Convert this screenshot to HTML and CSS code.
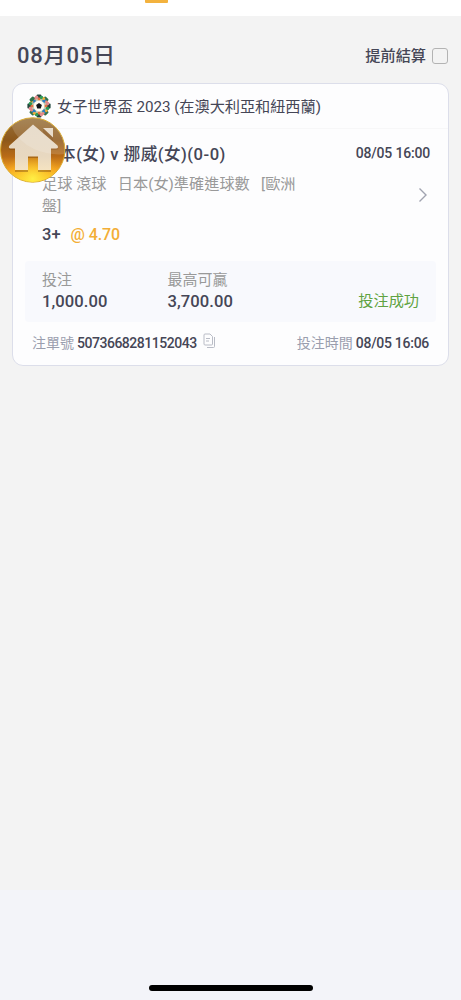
FILE: index.html
```
<!DOCTYPE html>
<html lang="zh-Hant">
<head>
  <meta charset="UTF-8" />
  <meta name="viewport" content="width=device-width, initial-scale=1" />
  <title>投注紀錄</title>
  <link rel="stylesheet" href="styles.css">
</head>
<body>
  <div class="tab-bar"><span class="tab-active"></span></div>

  <main>
    <header class="day-header">
      <h1>08月05日</h1>
      <label class="cashout">提前結算<span class="checkbox"></span></label>
    </header>

    <section class="card">
      <div class="league">
        <svg class="badge" width="24" height="24" viewBox="-12 -12 24 24">
          <circle r="9.8" fill="#c3cbae" />
          <g id="quarter">
            <rect x="-2.4" y="-11.6" width="4.8" height="4" rx="1" fill="#24483f" />
            <circle cx="-2.4" cy="-8.6" r="1.8" fill="#e58b91" />
            <circle cx="2.5" cy="-8.5" r="1.8" fill="#2c9b57" />
            <path d="M0-9 1.500-6.700 0-5-1.500-6.700z" fill="#e8743f" />
          </g>
          <use href="#quarter" transform="rotate(90)" />
          <use href="#quarter" transform="rotate(180)" />
          <use href="#quarter" transform="rotate(270)" />
          <g id="corner">
            <rect x="-2.6" y="-11.4" width="5.2" height="3.4" rx="1" fill="#30714b" transform="rotate(45)" />
            <circle cx="-5.2" cy="-5.2" r="2" fill="#2b7fc1" />
            <circle cx="-7.3" cy="-4.8" r="1.4" fill="#f0ae35" />
            <circle cx="-4.200" cy="-7.4" r="1.4" fill="#e58b80" />
          </g>
          <use href="#corner" transform="rotate(90)" />
          <use href="#corner" transform="rotate(180)" />
          <use href="#corner" transform="rotate(270)" />
          <circle r="5.4" fill="#fffdf4" />
          <path d="M0-3 2.9-.9 1.8 2.4H-1.8L-2.9-.9z" fill="#15191b" />
        </svg>
        <span>女子世界盃 2023 (在澳大利亞和紐西蘭)</span>
      </div>

      <div class="match">
        <div class="match-title">
          <h2>日本(女) v 挪威(女)(0-0)</h2>
          <time>08/05 16:00</time>
        </div>
        <div class="match-body">
          <p class="market">足球 滾球&nbsp;&nbsp; 日本(女)準確進球數&nbsp;&nbsp; [歐洲盤]</p>
          <svg class="arrow" width="10" height="16" viewBox="0 0 10 16">
            <path d="M1.5 1.5 8 8 1.5 14.5" />
          </svg>
        </div>
        <div class="pick">3+<span class="odds">@ 4.70</span></div>
      </div>

      <div class="stake">
        <div class="amount"><span>投注</span><b>1,000.00</b></div>
        <div class="amount"><span>最高可贏</span><b>3,700.00</b></div>
        <div class="status">投注成功</div>
      </div>

      <footer class="ticket">
        <div class="ticket-no">
          <span>注單號</span><b>5073668281152043</b>
          <svg class="copy" width="13" height="16" viewBox="0 0 13 16">
            <path d="M2 1H7L9.5 3.5V11a1 1 0 0 1-1 1H2A1 1 0 0 1 1 11V2A1 1 0 0 1 2 1zM3 5.5H7M3 8H6M11.5 4V13.5a1 1 0 0 1-1 1H4" />
          </svg>
        </div>
        <div class="ticket-time"><span>投注時間</span><b>08/05 16:06</b></div>
      </footer>
    </section>
  </main>

  <div class="bottom-bar"><span class="indicator"></span></div>

  <!-- floating home button -->
  <a class="home">
    <svg width="66" height="66" viewBox="0 0 66 66">
      <defs>
        <linearGradient id="gold" x1="0" y1="0" x2="0" y2="1">
          <stop offset="0" stop-color="#98713b" />
          <stop offset=".35" stop-color="#8d581b" />
          <stop offset=".6" stop-color="#b96b16" />
          <stop offset=".8" stop-color="#f4a11f" />
          <stop offset="1" stop-color="#ffe332" />
        </linearGradient>
        <radialGradient id="glow" cx=".5" cy=".95" r=".45">
          <stop offset="0" stop-color="#ffef45" />
          <stop offset="1" stop-color="#ffb51f" stop-opacity="0" />
        </radialGradient>
        <linearGradient id="house" x1="0" y1="0" x2="0" y2="1">
          <stop offset="0" stop-color="#e3d6c5" />
          <stop offset=".7" stop-color="#e8d8c0" />
          <stop offset="1" stop-color="#f5e3c1" />
        </linearGradient>
        <clipPath id="round"><circle cx="32.7" cy="33" r="32" /></clipPath>
      </defs>
      <circle cx="32.7" cy="33" r="32.2" fill="url(#gold)" stroke="#d9a92c" />
      <circle cx="32.7" cy="33" r="32" fill="url(#glow)" />
      <path d="M33 8 43 16.500V11H53V25L58 29.500Q59 32 56 32H51V54H38V40H28V54H15V32H10Q8 31 9.500 29z" fill="#75420c" opacity=".4" transform="translate(0 1)" />
      <path d="M33 7.500 57.500 28.500Q59 31.500 56 31.500H51V53H38V39.500H28V53H15V31.500H10Q8 30.500 9.500 28.500zM43 11H53V20.500z" fill="url(#house)" />
      <path d="M11 0H66V37Q50 39 34 32 17 24 11 8z" fill="#fff" opacity=".15" clip-path="url(#round)" />
    </svg>
  </a>
</body>
</html>
```
FILE: styles.css
```
* {
  box-sizing: border-box;
}

body {
  margin: 0;
  height: 1000px;
  display: flex;
  flex-direction: column;
  font-family: Roboto, "Noto Sans CJK TC", sans-serif;
  font-weight: 500;
  color: #454656;
  background: #f3f3f3;
  overflow: hidden;
}

h1, h2, p {
  margin: 0;
  font-weight: 500;
}

b {
  font-weight: 500;
}

.tab-bar {
  height: 16px;
  padding-left: 145px;
  background: #fff;
}

.tab-active {
  display: block;
  width: 23px;
  height: 3px;
  border-radius: 0 0 1px 1px;
  background: #f3b23e;
}

main {
  flex: 1;
  padding: 0 12px;
}

.day-header {
  display: flex;
  justify-content: space-between;
  align-items: center;
  height: 67px;
  padding: 12px 1px 0 5px;
}

h1 {
  font-size: 22px;
  line-height: 30px;
  letter-spacing: 0.8px;
}

.cashout {
  display: flex;
  align-items: center;
  gap: 6px;
  font-size: 15.2px;
  line-height: 22px;
}

.checkbox {
  width: 16px;
  height: 16px;
  border: 1px solid #b3b3b3;
  border-radius: 3px;
}

.card {
  height: 283px;
  border: 1px solid #dcdeea;
  border-radius: 11px;
  background: #fdfdfe;
}

.league {
  display: flex;
  align-items: center;
  gap: 6px;
  height: 45px;
  padding: 0 0 1px 14px;
  border-bottom: 1px solid #f7f7f8;
  font-size: 15.2px;
  font-weight: 400;
  letter-spacing: -0.04px;
}

.league span {
  margin-top: -2px;
}

.match {
  height: 132px;
  padding: 12px 18px 0 29px;
}

.match-title {
  display: flex;
  justify-content: space-between;
  align-items: center;
  height: 24px;
}

h2 {
  font-size: 16.6px;
  letter-spacing: 0.48px;
}

time {
  font-size: 14px;
  letter-spacing: -0.18px;
}

.match-body {
  display: flex;
  justify-content: space-between;
  align-items: center;
  height: 60px;
  padding-right: 2px;
}

.market {
  width: 265px;
  margin-top: -1px;
  font-size: 15.2px;
  font-weight: 400;
  line-height: 22px;
  color: #999;
}

.arrow {
  fill: none;
  stroke: #a0a3b0;
  stroke-width: 1.4;
}

.pick {
  margin-top: -4px;
  font-size: 16.5px;
  line-height: 28px;
}

.odds {
  margin-left: 10px;
  font-size: 16px;
  letter-spacing: -0.1px;
  color: #f3ae36;
}

.stake {
  display: flex;
  height: 61px;
  margin: 0 12px;
  padding: 9px 17px 0;
  border-radius: 4px;
  background: #f8f9fd;
}

.amount {
  width: 125.5px;
}

.amount span,
.amount b {
  display: block;
  line-height: 21px;
}

.amount span {
  font-size: 15px;
  font-weight: 400;
  color: #999;
}

.amount b {
  font-size: 16.6px;
  letter-spacing: 0.08px;
}

.status {
  margin: 20px 0 0 auto;
  font-size: 15.2px;
  font-weight: 400;
  line-height: 22px;
  color: #5fa342;
}

.ticket {
  display: flex;
  justify-content: space-between;
  align-items: center;
  height: 42px;
  padding: 0 19px 1px;
  font-size: 14px;
}

.ticket span {
  margin: -1px 3px 0 0;
  font-weight: 400;
  color: #9a9eae;
}

.ticket-no,
.ticket-time {
  display: flex;
  align-items: center;
}

.ticket b {
  letter-spacing: -0.28px;
}

.ticket-no b {
  letter-spacing: -0.48px;
}

.copy {
  margin: -3px 0 0 6px;
  fill: none;
  stroke: #b9bcc6;
}

.bottom-bar {
  display: flex;
  justify-content: center;
  align-items: flex-end;
  height: 110px;
  padding-bottom: 9px;
  background: #f3f4f9;
}

.indicator {
  width: 164px;
  height: 6px;
  border-radius: 3px;
  background: #000;
}

.home {
  position: absolute;
  top: 117px;
  left: 0;
  width: 66px;
  height: 66px;
}

.home svg {
  display: block;
}
```
